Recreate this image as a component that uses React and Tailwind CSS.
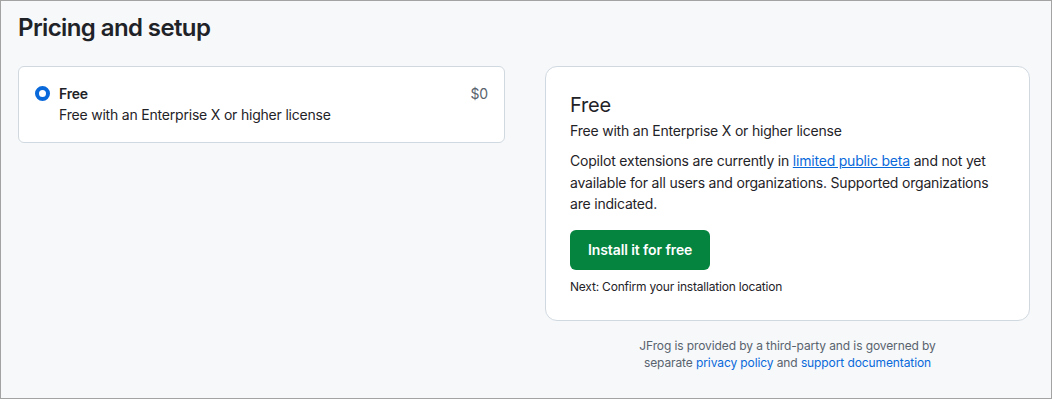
export default function App() {
  return (
    <div
      className="w-[1052px] h-[399px] overflow-hidden border border-[#a3a3a3] bg-[#f6f8fa] text-[#1f2328]"
      style={{ fontFamily: 'Inter, "Noto Sans", sans-serif' }}
    >
      <div className="pl-[17px] pr-[21px]">
        <h2 className="pt-[9px] text-[24px] leading-[36px] font-semibold tracking-[-0.6px]">Pricing and setup</h2>

        <div className="mt-[20px] grid grid-cols-[487px_485px] gap-[40px] items-start tracking-[-0.2px]">
          <div className="rounded-md border border-[#d1d9e0] bg-white px-4 pt-[17px] pb-[17px] flex items-start">
            <span className="mt-[2px] w-[15px] h-[15px] rounded-full border-[4px] border-[#0969da] bg-white shrink-0" />
            <div className="ml-[9px] flex-1">
              <div className="text-[14px] leading-5 font-semibold">Free</div>
              <div className="mt-px text-[14px] leading-5">Free with an Enterprise X or higher license</div>
            </div>
            <span className="text-[14px] leading-5 text-[#59636e]">$0</span>
          </div>

          <div>
            <div className="rounded-xl border border-[#d1d9e0] bg-white p-6">
              <div className="text-[20px] leading-7">Free</div>
              <div className="mt-0.5 text-[14px] leading-5">Free with an Enterprise X or higher license</div>
              <p className="mt-[9px] text-[14px] leading-[21.5px]">
                Copilot extensions are currently in{' '}
                <a href="#" className="text-[#0969da] underline">limited public beta</a> and not yet available for all users and organizations. Supported organizations are indicated.
              </p>
              <button className="mt-[15px] h-10 px-[18px] rounded-md bg-[#04843f] text-white text-[14px] font-semibold tracking-[-0.1px]">
                Install it for free
              </button>
              <div className="mt-2 text-[12px] leading-[18px]">Next: Confirm your installation location</div>
            </div>
            <div className="mt-4 text-center text-[12px] leading-[17.5px] text-[#59636e] tracking-[-0.1px]">
              JFrog is provided by a third-party and is governed by
              <br />
              separate <a href="#" className="text-[#0969da]">privacy policy</a> and{' '}
              <a href="#" className="text-[#0969da]">support documentation</a>
            </div>
          </div>
        </div>
      </div>
    </div>
  );
}
